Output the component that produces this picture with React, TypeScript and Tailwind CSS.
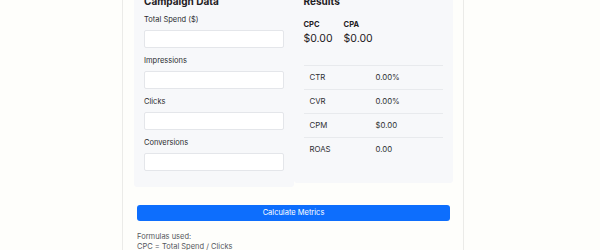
import React, { useState } from 'react';

const FIELDS = ['Total Spend ($)', 'Impressions', 'Clicks', 'Conversions'];

const ROWS: [string, string][] = [
  ['CTR', '0.00%'],
  ['CVR', '0.00%'],
  ['CPM', '$0.00'],
  ['ROAS', '0.00'],
];

const App: React.FC = () => {
  const [values, setValues] = useState<string[]>(['', '', '', '']);

  return (
    <div className="min-h-screen bg-[#fefefb] font-['Inter',sans-serif] text-[#1f2023] overflow-hidden">
      <div className="ml-[122px] w-[342px] border-x border-[#ebebe8] -mt-[16px] pb-8">
        <div className="grid grid-cols-2 ml-[11px] mr-[10px]">
          {/* Inputs */}
          <div className="bg-[#f7f8fa] rounded-[3px] pt-[10px] pb-[9px] px-[10px]">
            <h2 className="text-[10px] leading-[14px] font-bold mb-[6px]">Campaign Data</h2>
            {FIELDS.map((f, i) => (
              <div key={f} className="mb-[7px]">
                <label className="block text-[7.5px] leading-[12px] text-[#2a2b2e] mb-[4px]">{f}</label>
                <input
                  type="number"
                  value={values[i]}
                  onChange={e => setValues(v => v.map((x, j) => (j === i ? e.target.value : x)))}
                  className="block w-full h-[18px] bg-white border border-[#e4e6ea] rounded-[2px] px-1 text-[8px] outline-none"
                />
              </div>
            ))}
          </div>

          {/* Results */}
          <div className="bg-[#f7f8fa] rounded-[3px] pt-[10px] px-[10px] pb-[21px] self-start">
            <h2 className="text-[10px] leading-[14px] font-bold mb-[11px]">Results</h2>
            <div className="flex gap-[11px]">
              <div>
                <div className="text-[7.5px] leading-[12px] font-bold">CPC</div>
                <div className="text-[10.5px] leading-[16px]">$0.00</div>
              </div>
              <div>
                <div className="text-[7.5px] leading-[12px] font-bold">CPA</div>
                <div className="text-[10.5px] leading-[16px]">$0.00</div>
              </div>
            </div>
            <table className="w-full mt-[18px] text-[7.8px] text-[#2e2f33]">
              <tbody>
                {ROWS.map(([k, v]) => (
                  <tr key={k} className="h-[24px]">
                    <td className="border-t border-[#e8eaed] pl-[6px] w-[66px]">{k}</td>
                    <td className="border-t border-[#e8eaed] pl-[6px]">{v}</td>
                  </tr>
                ))}
              </tbody>
            </table>
          </div>
        </div>

        <button className="block mx-[14px] w-[313px] mt-[18px] h-[16px] rounded-[3px] bg-[#0d6efd] text-white text-[7.5px] leading-[16px]">
          Calculate Metrics
        </button>

        <div className="mx-[14px] mt-[11px] text-[7.5px] leading-[10px] text-[#55575c]">
          <div>Formulas used:</div>
          <div>CPC = Total Spend / Clicks</div>
        </div>
      </div>
    </div>
  );
};

export default App;
